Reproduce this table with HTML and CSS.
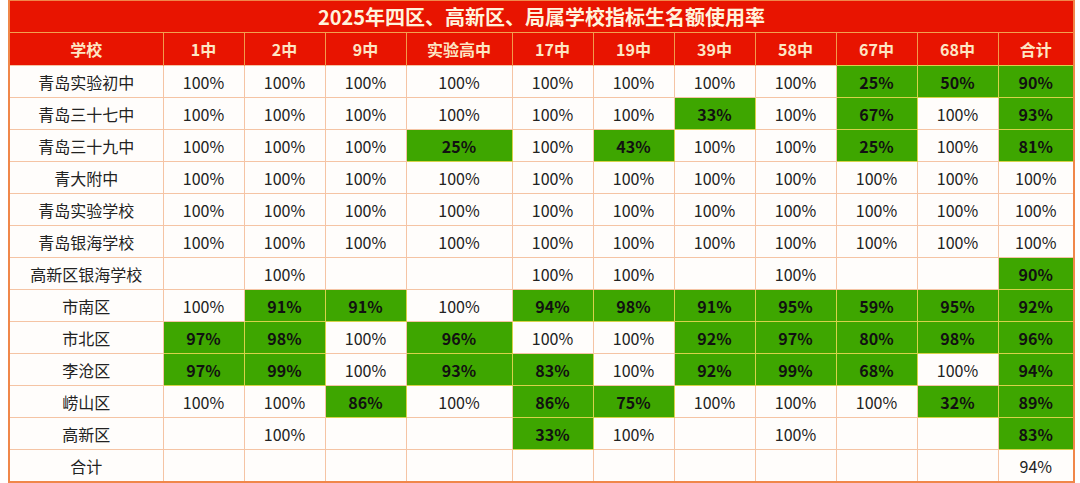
FILE: index.html
```html
<!DOCTYPE html>
<html lang="zh">
<head>
<meta charset="utf-8">
<link rel="stylesheet" href="styles.css">
</head>
<body>
<div class="sheet">
  <div class="title">2025年四区、高新区、局属学校指标生名额使用率</div>
  <table class="grid">
    <colgroup>
      <col class="c-name"><col class="c-n"><col class="c-n"><col class="c-n"><col class="c-w"><col class="c-n"><col class="c-n"><col class="c-n"><col class="c-n"><col class="c-n"><col class="c-n"><col class="c-t">
    </colgroup>
    <thead>
      <tr><th>学校</th><th>1中</th><th>2中</th><th>9中</th><th>实验高中</th><th>17中</th><th>19中</th><th>39中</th><th>58中</th><th>67中</th><th>68中</th><th>合计</th></tr>
    </thead>
    <tbody>
      <tr><td>青岛实验初中</td><td>100%</td><td>100%</td><td>100%</td><td>100%</td><td>100%</td><td>100%</td><td>100%</td><td>100%</td><td class="g">25%</td><td class="g">50%</td><td class="g">90%</td></tr>
      <tr><td>青岛三十七中</td><td>100%</td><td>100%</td><td>100%</td><td>100%</td><td>100%</td><td>100%</td><td class="g">33%</td><td>100%</td><td class="g">67%</td><td>100%</td><td class="g">93%</td></tr>
      <tr><td>青岛三十九中</td><td>100%</td><td>100%</td><td>100%</td><td class="g">25%</td><td>100%</td><td class="g">43%</td><td>100%</td><td>100%</td><td class="g">25%</td><td>100%</td><td class="g">81%</td></tr>
      <tr><td>青大附中</td><td>100%</td><td>100%</td><td>100%</td><td>100%</td><td>100%</td><td>100%</td><td>100%</td><td>100%</td><td>100%</td><td>100%</td><td>100%</td></tr>
      <tr><td>青岛实验学校</td><td>100%</td><td>100%</td><td>100%</td><td>100%</td><td>100%</td><td>100%</td><td>100%</td><td>100%</td><td>100%</td><td>100%</td><td>100%</td></tr>
      <tr><td>青岛银海学校</td><td>100%</td><td>100%</td><td>100%</td><td>100%</td><td>100%</td><td>100%</td><td>100%</td><td>100%</td><td>100%</td><td>100%</td><td>100%</td></tr>
      <tr><td>高新区银海学校</td><td></td><td>100%</td><td></td><td></td><td>100%</td><td>100%</td><td></td><td>100%</td><td></td><td></td><td class="g">90%</td></tr>
      <tr><td>市南区</td><td>100%</td><td class="g">91%</td><td class="g">91%</td><td>100%</td><td class="g">94%</td><td class="g">98%</td><td class="g">91%</td><td class="g">95%</td><td class="g">59%</td><td class="g">95%</td><td class="g">92%</td></tr>
      <tr><td>市北区</td><td class="g">97%</td><td class="g">98%</td><td>100%</td><td class="g">96%</td><td>100%</td><td>100%</td><td class="g">92%</td><td class="g">97%</td><td class="g">80%</td><td class="g">98%</td><td class="g">96%</td></tr>
      <tr><td>李沧区</td><td class="g">97%</td><td class="g">99%</td><td>100%</td><td class="g">93%</td><td class="g">83%</td><td>100%</td><td class="g">92%</td><td class="g">99%</td><td class="g">68%</td><td>100%</td><td class="g">94%</td></tr>
      <tr><td>崂山区</td><td>100%</td><td>100%</td><td class="g">86%</td><td>100%</td><td class="g">86%</td><td class="g">75%</td><td>100%</td><td>100%</td><td>100%</td><td class="g">32%</td><td class="g">89%</td></tr>
      <tr><td>高新区</td><td></td><td>100%</td><td></td><td></td><td class="g">33%</td><td>100%</td><td></td><td>100%</td><td></td><td></td><td class="g">83%</td></tr>
      <tr><td>合计</td><td></td><td></td><td></td><td></td><td></td><td></td><td></td><td></td><td></td><td></td><td>94%</td></tr>
    </tbody>
  </table>
</div>
</body>
</html>
```

FILE: styles.css
```css
html, body {
  margin: 0;
  padding: 0;
  background: #ffffff;
}

body {
  font-family: "Noto Sans CJK SC", "Noto Sans", sans-serif;
  color: #222222;
}

.sheet {
  margin-left: 8px;
  width: 1067px;
  border: 2px solid #f0874a;
  border-top-width: 1px;
  box-sizing: border-box;
  background: #fffdfb;
}

.title {
  height: 31px;
  background: #e81400;
  color: #fff3dc;
  font-size: 20px;
  font-weight: 700;
  line-height: 31px;
  text-align: center;
  border-bottom: 1px solid #f2a050;
}

.grid {
  width: 100%;
  border-collapse: collapse;
  table-layout: fixed;
}

.c-name { width: 153px; }
.c-n { width: 81px; }
.c-w { width: 106px; }
.c-t { width: auto; }

.grid th {
  height: 32px;
  padding: 0;
  background: #e81400;
  color: #fde6c4;
  font-size: 16px;
  font-weight: 700;
  text-align: center;
  border-left: 1px solid #f29a4a;
  border-right: 1px solid #f29a4a;
}

.grid th:first-child { border-left: none; }
.grid th:last-child { border-right: none; }

.grid td {
  height: 31px;
  padding: 0;
  font-size: 16px;
  text-align: center;
  border: 1px solid #f5c4a4;
  line-height: 1;
}

.grid tr td:first-child { border-left: none; }
.grid tr td:last-child { border-right: none; }
.grid tbody tr:last-child td { border-bottom: none; }

.grid td.g {
  background: #3ea600;
  color: #111111;
  font-weight: 700;
  border-color: #d7d24a;
}
```
